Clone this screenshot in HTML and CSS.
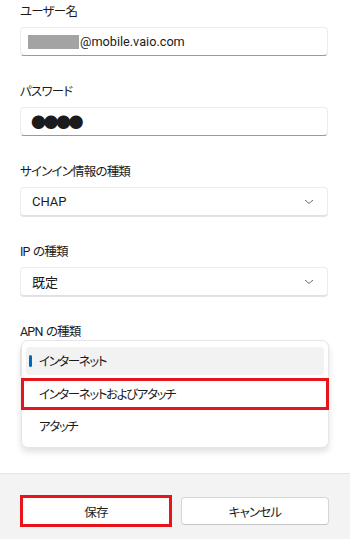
FILE: index.html
```html
<!DOCTYPE html>
<html lang="ja">
<head>
<meta charset="utf-8">
<link rel="stylesheet" href="styles.css">
</head>
<body>
<div class="page">
  <main class="form">
    <div class="field">
      <div class="label">ユーザー名</div>
      <div class="input user"><span class="redact"></span>@mobile.vaio.com</div>
    </div>
    <div class="field">
      <div class="label">パスワード</div>
      <div class="input pass">●●●●</div>
    </div>
    <div class="field">
      <div class="label">サインイン情報の種類</div>
      <div class="input select"><span class="val">CHAP</span>
        <svg class="chev" width="10" height="6" viewBox="0 0 10 6"><path d="M1 1 L5 4.5 L9 1" fill="none" stroke="#6a6a6a" stroke-width="1"/></svg>
      </div>
    </div>
    <div class="field">
      <div class="label">IP の種類</div>
      <div class="input select"><span class="val jp">既定</span>
        <svg class="chev" width="10" height="6" viewBox="0 0 10 6"><path d="M1 1 L5 4.5 L9 1" fill="none" stroke="#6a6a6a" stroke-width="1"/></svg>
      </div>
    </div>
    <div class="field apn">
      <div class="label">APN の種類</div>
      <div class="input select under"></div>
      <div class="popup">
        <div class="item sel"><span class="ind"></span>インターネット</div>
        <div class="item mark">インターネットおよびアタッチ</div>
        <div class="item">アタッチ</div>
      </div>
    </div>
  </main>
  <footer class="footer">
    <button class="btn save">保存</button>
    <button class="btn">キャンセル</button>
  </footer>
</div>
</body>
</html>
```

FILE: styles.css
```css
html, body {
  margin: 0;
  padding: 0;
  background: #ffffff;
}
body {
  font-family: "Roboto", "Noto Sans CJK JP", sans-serif;
  color: #1b1b1b;
  font-feature-settings: "palt";
}
.page {
  width: 350px;
  height: 539px;
  display: flex;
  flex-direction: column;
}
.form {
  flex: 1;
  padding: 2px 22px 0 20px;
}
.field {
  margin-bottom: 26px;
}
.label {
  font-family: "Roboto", "Noto Sans CJK JP", sans-serif;
  font-size: 12.5px;
  line-height: 20px;
  height: 20px;
  margin-bottom: 5px;
  letter-spacing: -0.8px;
  word-spacing: 1px;
}
.input {
  box-sizing: border-box;
  height: 29px;
  background: #fff;
  border: 1px solid #ececec;
  border-bottom: 1px solid #9a9a9a;
  border-radius: 4px;
  display: flex;
  align-items: center;
  padding: 0 11px;
  font-size: 13px;
}
.user {
  padding-left: 7px;
  font-family: "Roboto", sans-serif;
  font-size: 12.7px;
}
.redact {
  display: inline-block;
  width: 51px;
  height: 14px;
  background: #a3a3a3;
  margin-right: 1px;
}
.pass {
  font-family: "Noto Sans CJK JP", sans-serif;
  font-feature-settings: normal;
  font-size: 15px;
  letter-spacing: -2.5px;
  padding-left: 10px;
}
.select {
  justify-content: space-between;
  border-bottom-color: #e0e0e0;
  box-shadow: 0 1px 0 #e4e4e4;
}
.val {
  font-family: "Roboto", "Noto Sans CJK JP", sans-serif;
  font-size: 13px;
}
.chev {
  margin-right: 2px;
}
.apn {
  position: relative;
}
.popup {
  position: absolute;
  left: 1px;
  right: -1px;
  top: 18px;
  box-sizing: border-box;
  height: 108px;
  background: #fff;
  border: 1px solid #e6e6e6;
  border-radius: 7px;
  box-shadow: 0 4px 6px rgba(0,0,0,0.12);
  padding: 6px 4px 4px;
  font-family: "Noto Sans CJK JP", sans-serif;
  font-size: 12.5px;
  letter-spacing: -1.4px;
}
.item {
  position: relative;
  height: 28px;
  line-height: 28px;
  padding-left: 13px;
  border-radius: 4px;
  margin-bottom: 5px;
}
.item.sel {
  background: #f2f2f2;
  margin-bottom: 3px;
}
.item.mark {
  height: 32px;
  line-height: 32px;
  margin-bottom: 2px;
}
.item.mark::after {
  content: "";
  position: absolute;
  left: -5px;
  right: -5px;
  top: 0;
  bottom: 0;
  border: 3px solid #e8141c;
}
.ind {
  position: absolute;
  left: 3px;
  top: 8px;
  width: 3px;
  height: 12px;
  border-radius: 2px;
  background: #0067c0;
}
.footer {
  height: 66px;
  box-sizing: border-box;
  background: #f3f3f3;
  border-top: 1px solid #e5e5e5;
  display: flex;
  gap: 11px;
  padding: 23px 21px 0 22px;
}
.btn {
  flex: 1;
  height: 28px;
  background: #fff;
  border: 1px solid #d6d6d6;
  border-bottom-color: #c4c4c4;
  border-radius: 4px;
  font-family: "Noto Sans CJK JP", sans-serif;
  font-feature-settings: "palt";
  font-size: 12.5px;
  letter-spacing: -0.8px;
  color: #1b1b1b;
  padding: 0;
}
.btn.save {
  border-radius: 0;
  outline: 3px solid #e8141c;
  outline-offset: -1px;
}
```
